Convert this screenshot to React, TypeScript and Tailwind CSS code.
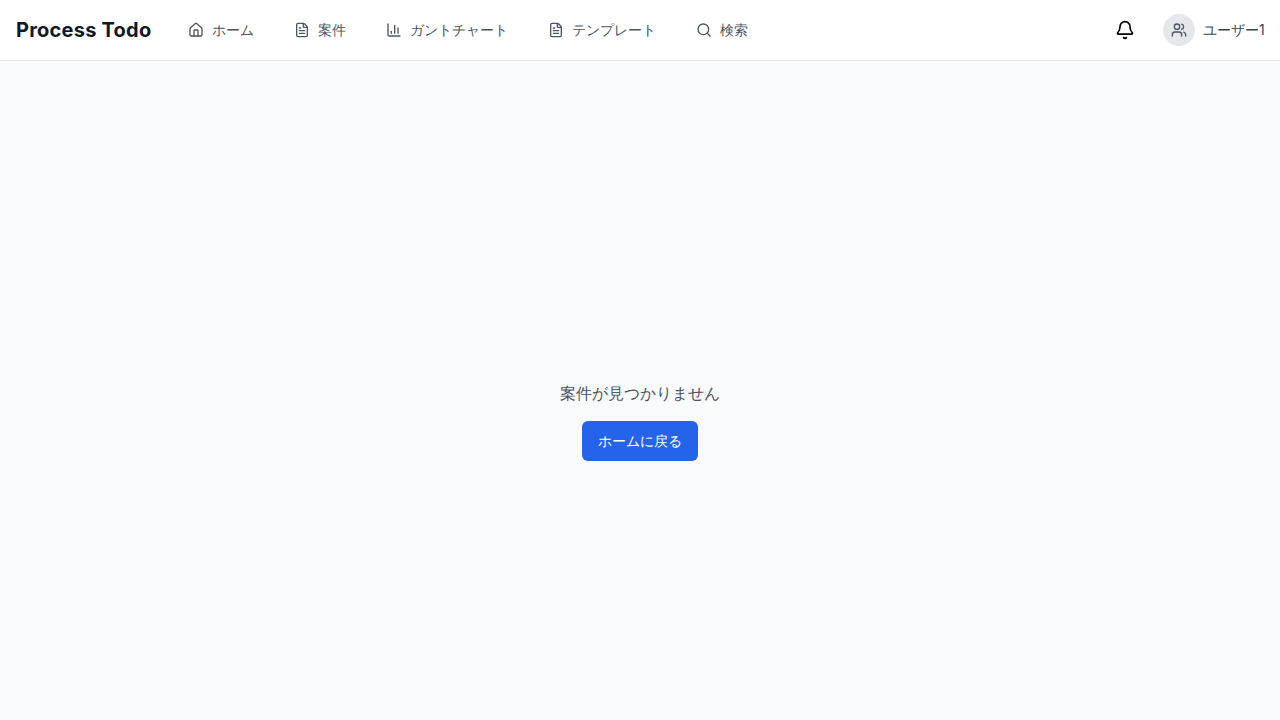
import { Home, FileText, BarChart3, Search, Bell, Users } from "lucide-react";

const navItems = [
  { label: "ホーム", icon: Home },
  { label: "案件", icon: FileText },
  { label: "ガントチャート", icon: BarChart3 },
  { label: "テンプレート", icon: FileText },
  { label: "検索", icon: Search },
];

export default function App() {
  return (
    <div lang="ja" className="flex h-screen flex-col bg-[#f9fafb] font-['Inter',sans-serif]">
      <header className="h-[61px] shrink-0 border-b border-[#e5e7eb] bg-white">
        <div className="flex h-[60px] items-center justify-between px-4">
          <div className="flex items-center gap-5">
            <h1 className="w-[136px] text-xl font-bold tracking-[0.23px] whitespace-nowrap text-[#111827]">Process Todo</h1>
            <nav className="flex items-center gap-2">
              {navItems.map(({ label, icon: Icon }) => (
                <a key={label} href="#" className="flex h-10 items-center gap-2 px-4 text-sm text-[#4b5563]">
                  <Icon className="size-4" />
                  <span>{label}</span>
                </a>
              ))}
            </nav>
          </div>
          <div className="flex items-center gap-4">
            <button className="flex size-11 items-center justify-center text-black">
              <Bell className="size-5" />
            </button>
            <div className="flex items-center gap-2">
              <div className="flex size-8 items-center justify-center rounded-full bg-[#e5e7eb] text-[#4b5563]">
                <Users className="size-4" />
              </div>
              <span className="w-[61px] text-sm whitespace-nowrap text-[#374151]">ユーザー1</span>
            </div>
          </div>
        </div>
      </header>
      <main className="flex flex-1 flex-col items-center justify-center pt-[61px]">
        <p className="mb-4 text-base text-[#4b5563]">案件が見つかりません</p>
        <button className="h-10 rounded-md bg-[#2563eb] px-4 text-sm text-white">ホームに戻る</button>
      </main>
    </div>
  );
}
